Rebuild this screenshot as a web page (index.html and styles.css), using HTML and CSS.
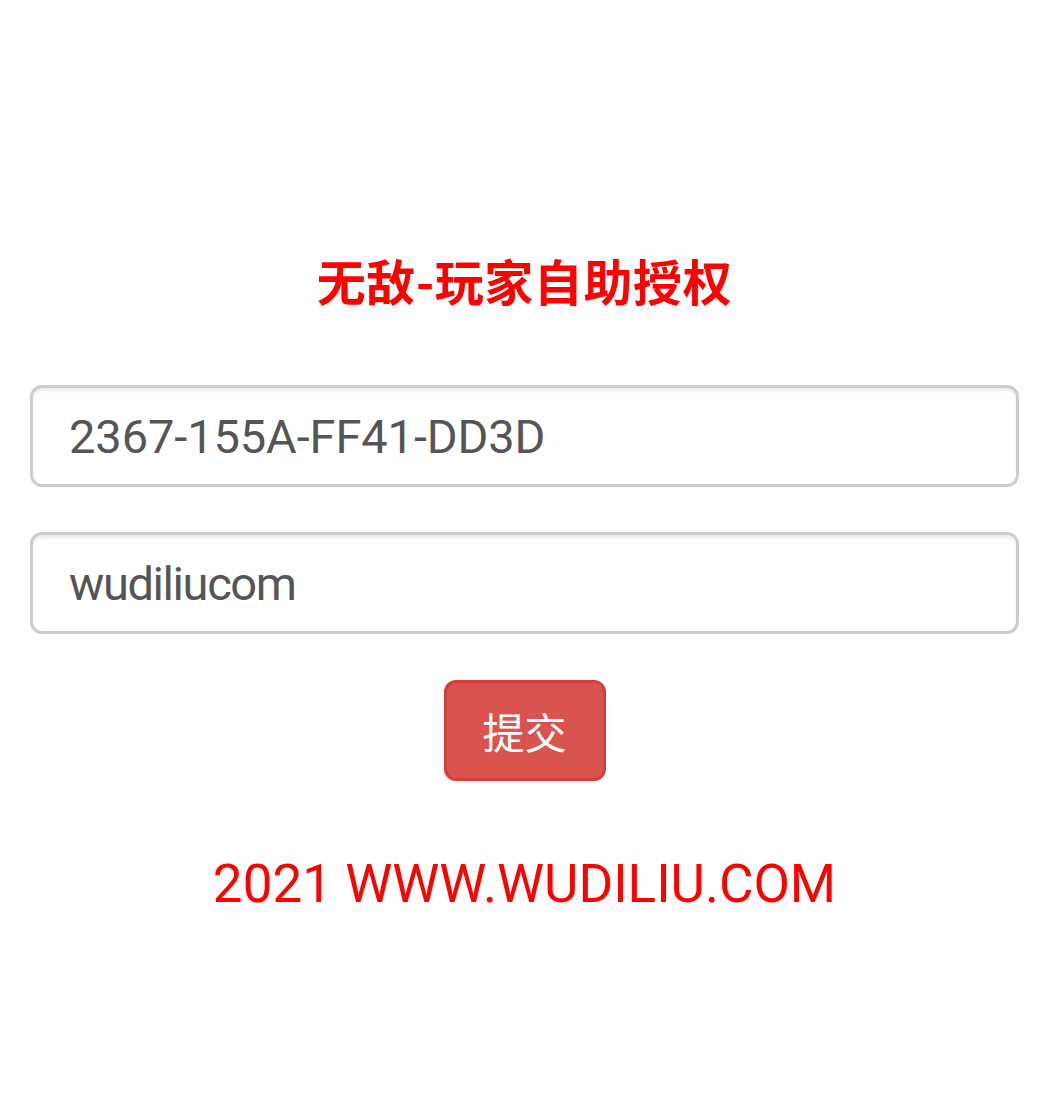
FILE: index.html
```html
<!DOCTYPE html>
<html lang="zh-CN">
<head>
<meta charset="utf-8">
<title>无敌-玩家自助授权</title>
<link rel="stylesheet" href="styles.css">
</head>
<body>
<div class="page">
  <h1 class="title">无敌-玩家自助授权</h1>
  <form class="form">
    <input class="field field-key" type="text" value="2367-155A-FF41-DD3D">
    <input class="field field-user" type="text" value="wudiliucom">
    <div class="actions">
      <button class="btn" type="button">提交</button>
    </div>
  </form>
  <p class="footer">2021 WWW.WUDILIU.COM</p>
</div>
</body>
</html>
```
FILE: styles.css
```css
html, body {
  margin: 0;
  padding: 0;
  background: #fff;
}
body {
  font-family: Roboto, "Noto Sans CJK SC", sans-serif;
}
.page {
  padding: 253px 45px 0 30px;
}
.title {
  margin: 0;
  text-align: center;
  color: #ff0000;
  font-family: "Noto Sans CJK SC", sans-serif;
  font-weight: 700;
  font-size: 49px;
  line-height: 53px;
  letter-spacing: 0.6px;
}
.form {
  margin-top: 79px;
  display: flex;
  flex-direction: column;
  gap: 45px;
}
.field {
  box-sizing: border-box;
  display: block;
  width: 100%;
  height: 102px;
  margin: 0;
  padding: 0 36px;
  border: 3px solid #ccc;
  border-radius: 12px;
  box-shadow: inset 0 3px 3px rgba(0,0,0,0.075);
  font-family: Roboto, sans-serif;
  font-size: 47px;
  color: #555;
  background: #fff;
  outline: none;
}
.field-key {
  letter-spacing: -0.1px;
}
.field-user {
  letter-spacing: -1.4px;
}
.actions {
  display: flex;
  justify-content: center;
  margin-top: 1px;
}
.btn {
  box-sizing: border-box;
  width: 162px;
  height: 101px;
  padding: 0 36px;
  border: 3px solid #d43f3a;
  border-radius: 12px;
  background: #d9534f;
  color: #fff;
  font-family: "Noto Sans CJK SC", sans-serif;
  font-size: 42px;
  line-height: 1;
}
.footer {
  margin: 73px 0 0;
  text-align: center;
  color: #ff0000;
  font-family: Roboto, sans-serif;
  font-size: 53px;
  line-height: 60px;
}
```
